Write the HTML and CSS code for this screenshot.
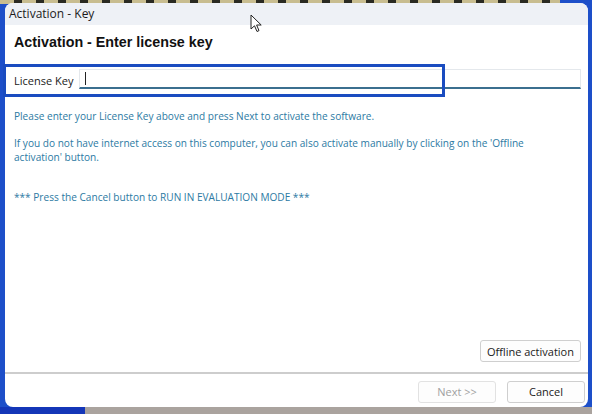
FILE: index.html
```html
<!DOCTYPE html>
<html>
<head>
<meta charset="utf-8">
<link rel="stylesheet" href="styles.css">
</head>
<body>
<div class="desktop">
  <div class="wallpaper-top"></div>
  <div class="window">
    <div class="titlebar">Activation - Key</div>
    <div class="content">
      <h1 class="heading">Activation - Enter license key</h1>
      <div class="key-row">
        <div class="highlight"></div>
        <label class="key-label">License Key</label>
        <div class="key-input"><span class="caret"></span></div>
      </div>
      <div class="info">
        <p class="msg">Please enter your License Key above and press Next to activate the software.</p>
        <p class="msg">If you do not have internet access on this computer, you can also activate manually by clicking on the 'Offline activation' button.</p>
        <p class="msg eval">*** Press the Cancel button to RUN IN EVALUATION MODE ***</p>
      </div>
      <div class="offline-row"><button class="btn">Offline activation</button></div>
    </div>
    <div class="footer">
      <button class="btn disabled">Next &gt;&gt;</button>
      <button class="btn cancel">Cancel</button>
    </div>
  </div>
  <svg class="pointer" width="13" height="19" viewBox="0 0 13 19">
    <path d="M1 1 L1 15 L4.5 11.8 L7 17.5 L9 16.6 L6.6 11 L11.2 11 Z" fill="#ffffff" stroke="#222" stroke-width="1" stroke-linejoin="round"/>
  </svg>
  <div class="taskbar"><div class="tb-blue"></div><div class="tb-gray"></div></div>
</div>
</body>
</html>
```
FILE: styles.css
```css
* { box-sizing: border-box; }
html, body { margin: 0; padding: 0; }
body {
  width: 592px;
  height: 414px;
  overflow: hidden;
  background: #1d4fc9;
  font-family: "Open Sans", "Noto Sans", sans-serif;
}
.desktop {
  position: relative;
  width: 592px;
  height: 414px;
  padding: 3px 4px 0 5px;
}
.wallpaper-top {
  position: absolute;
  left: 0; top: 0;
  width: 560px; height: 4px;
  background: repeating-linear-gradient(90deg, #c8bd90 0 14px, #2a2a22 14px 22px);
}
.window {
  position: relative;
  height: 404px;
  background: #ffffff;
  border-radius: 8px;
  display: flex;
  flex-direction: column;
  z-index: 1;
}
.titlebar {
  height: 22px;
  background: #eef1f6;
  border-radius: 8px 8px 0 0;
  font-size: 12px;
  color: #1c1c1c;
  padding: 3px 0 0 4px;
  line-height: 16px;
}
.content {
  flex: 1;
  display: flex;
  flex-direction: column;
  padding: 0 7px 0 9px;
}
.heading {
  margin: 8px 0 0 0;
  font-family: "Liberation Sans", Arial, sans-serif;
  font-weight: bold;
  font-size: 14.3px;
  line-height: 18px;
  color: #111;
}
.key-row {
  position: relative;
  margin-top: 18px;
  height: 22px;
  display: flex;
  align-items: center;
}
.highlight {
  position: absolute;
  left: -11px; top: -5px;
  width: 442px; height: 33px;
  border: 3px solid #1a4cc0;
  pointer-events: none;
  z-index: 2;
}
.key-label {
  font-size: 11px;
  color: #1a1a1a;
  width: 65px;
}
.key-input {
  flex: 1;
  height: 20px;
  margin-top: -2px;
  border: 1px solid #e4e8ec;
  border-bottom: 2px solid #3b6f8f;
  position: relative;
}
.caret {
  position: absolute;
  left: 5px; top: 2px;
  width: 1px; height: 13px;
  background: #222;
}
.info {
  margin-top: 18px;
  max-width: 540px;
  color: #2c7aa3;
  font-size: 10.1px;
  line-height: 14px;
}
.msg { margin: 0 0 13px 0; }
.eval { margin-top: 26px; }
.offline-row {
  margin-top: auto;
  display: flex;
  justify-content: flex-end;
  padding-bottom: 10px;
}
.btn {
  font-family: "Open Sans", "Noto Sans", sans-serif;
  font-size: 11px;
  color: #1a1a1a;
  background: #fdfdfd;
  border: 1px solid #cfcfcf;
  border-radius: 3px;
  height: 22px;
  padding: 0 6px;
}
.footer {
  border-top: 2px solid #cdcdcd;
  height: 35px;
  display: flex;
  justify-content: flex-end;
  align-items: center;
  gap: 11px;
  padding: 2px 3px 0 0;
}
.footer .btn { width: 78px; }
.btn.disabled { color: #a0a0a0; border-color: #e2e2e2; }
.pointer {
  position: absolute;
  left: 250px; top: 14px;
  z-index: 5;
}
.taskbar {
  position: absolute;
  left: 0; bottom: 0;
  width: 592px; height: 7px;
  display: flex;
}
.tb-blue { width: 85px; background: #1436b8; }
.tb-gray { flex: 1; background: #aaa39e; }
```
